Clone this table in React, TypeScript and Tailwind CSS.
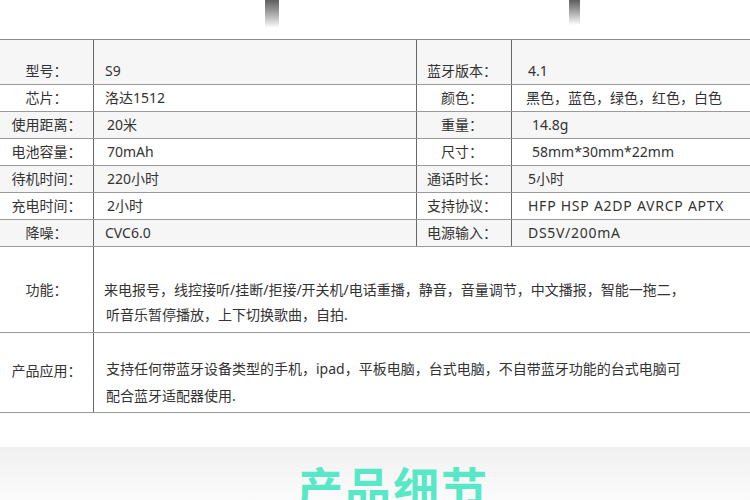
const font = { fontFamily: '"Noto Sans", "Noto Sans CJK SC", "Microsoft YaHei", sans-serif' };

type Spec = {
  l1: string;
  v1: string;
  l2: string;
  v2: string;
  p1?: string;
  p2?: string;
};

const specs: Spec[] = [
  { l1: "型号：", v1: "S9", l2: "蓝牙版本：", v2: "4.1" },
  { l1: "芯片：", v1: "洛达1512", l2: "颜色：", v2: "黑色，蓝色，绿色，红色，白色", p2: "pl-[14px]" },
  { l1: "使用距离：", v1: "20米", l2: "重量：", v2: "14.8g", p1: "pl-[13px]", p2: "pl-[20px]" },
  { l1: "电池容量：", v1: "70mAh", l2: "尺寸：", v2: "58mm*30mm*22mm", p1: "pl-[13px]", p2: "pl-[20px]" },
  { l1: "待机时间：", v1: "220小时", l2: "通话时长：", v2: "5小时", p1: "pl-[13px]" },
  { l1: "充电时间：", v1: "2小时", l2: "支持协议：", v2: "HFP HSP A2DP AVRCP APTX", p1: "pl-[13px]", p2: "pl-[16px] tracking-[0.75px]" },
  { l1: "降噪：", v1: "CVC6.0", l2: "电源输入：", v2: "DS5V/200mA", p2: "pl-[16px] tracking-[0.7px]" },
];

export default function App() {
  return (
    <div className="w-[750px] h-[500px] overflow-hidden bg-white text-[14px] text-[#333]" style={font}>
      {/* top decoration */}
      <div className="h-[39px] flex items-start">
        <div className="ml-[265px] w-[14px] h-[28px] bg-gradient-to-b from-[#5e5e5e] to-white" />
        <div className="ml-[290px] w-[11px] h-[25px] bg-gradient-to-b from-[#5e5e5e] to-white" />
      </div>

      {/* spec table */}
      <div className="border-t border-[#8c8c8c]">
        {specs.map((s, i) => (
          <div
            key={i}
            className={`grid grid-cols-[94px_323px_95px_238px] border-b border-[#9a9a9a] ${
              i === 0 ? "h-[45px]" : "h-[27px]"
            } ${i % 2 === 0 ? "bg-[#f6f6f6]" : "bg-white"}`}
          >
            <div className="border-r border-[#666] flex items-end justify-center pb-[4px] leading-[18px]">
              {s.l1}
            </div>
            <div className={`border-r border-[#666] flex items-end pb-[4px] leading-[18px] ${s.p1 ?? "pl-[11px]"}`}>
              {s.v1}
            </div>
            <div className="border-r border-[#666] flex items-end justify-center pb-[4px] leading-[18px] pr-[4px]">
              {s.l2}
            </div>
            <div className={`flex items-end pb-[4px] leading-[18px] ${s.p2 ?? "pl-[16px]"}`}>{s.v2}</div>
          </div>
        ))}

        <div className="grid grid-cols-[94px_656px] h-[86px] border-b border-[#9a9a9a]">
          <div className="border-r border-[#666] flex items-center justify-center">功能：</div>
          <div className="pl-[10px] pt-[30px] leading-[25px]">
            来电报号，线控接听/挂断/拒接/开关机/电话重播，静音，音量调节，中文播报，智能一拖二，
            <br />
            <span className="pl-[2px]">听音乐暂停播放，上下切换歌曲，自拍.</span>
          </div>
        </div>

        <div className="grid grid-cols-[94px_656px] h-[80px] border-b border-[#9a9a9a]">
          <div className="border-r border-[#666] flex items-center justify-center pb-[4px]">产品应用：</div>
          <div className="pl-[12px] pt-[22px] leading-[27px]">
            支持任何带蓝牙设备类型的手机，ipad，平板电脑，台式电脑，不自带蓝牙功能的台式电脑可
            <br />
            配合蓝牙适配器使用.
          </div>
        </div>
      </div>

      {/* section heading */}
      <div className="mt-[34px] h-[60px] bg-gradient-to-b from-[#f1f1f1] to-[#fcfcfc] flex justify-center pl-[36px] pt-[18px]">
        <h2 className="text-[46px] leading-none font-bold tracking-[2px] text-[#58e8c8]">产品细节</h2>
      </div>
    </div>
  );
}
